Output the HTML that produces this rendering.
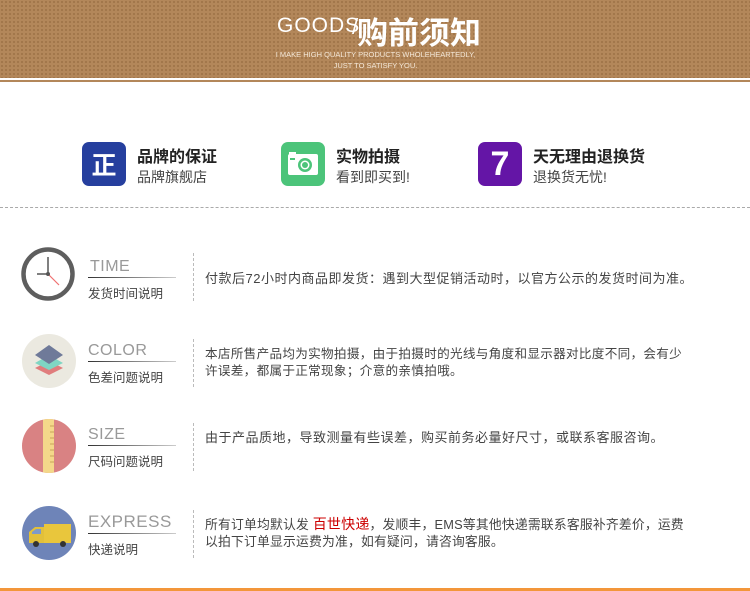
<!DOCTYPE html>
<html><head><meta charset="utf-8"><style>
*{margin:0;padding:0;box-sizing:border-box}
body{width:750px;height:591px;background:#fff;position:relative;overflow:hidden;font-family:"Liberation Sans","Noto Sans CJK SC",sans-serif;color:#333}
.a{position:absolute}
.band{left:0;top:0;width:750px;height:78px;background-color:#b3875a;background-image:radial-gradient(#9e7448 0.8px,transparent 1.2px);background-size:4px 4px}
.ico{width:44px;height:44px;border-radius:7px;color:#fff;display:flex;align-items:center;justify-content:center}
.t{font-size:16px;font-weight:bold;color:#222}
.s{font-size:14px;color:#444}
.lab{font-size:16px;color:#999;letter-spacing:0.5px}
.ul{height:1px;width:88px;background:linear-gradient(to right,#333,#ccc)}
.sub{font-size:12.5px;color:#444}
.div{width:0;border-left:1px dashed #bbb;height:48px}
.txt{font-size:13px;color:#444;line-height:17px;white-space:nowrap;letter-spacing:0.5px}
</style></head><body>
<div class="a band"></div>
<div class="a" style="left:0;top:80px;width:750px;height:2px;background:#b3875a"></div>
<div class="a" style="left:277px;top:14px;font-size:21px;color:#fff;letter-spacing:1px">GOODS</div>
<div class="a" style="left:352px;top:14px;font-size:22px;color:#fff">/</div>
<div class="a" style="left:357px;top:8px;font-size:31px;font-weight:bold;color:#fff">购前须知</div>
<div class="a" style="left:268px;top:49px;font-size:7.5px;color:#f3e6d6;width:215px;text-align:center;line-height:11px">I MAKE HIGH QUALITY PRODUCTS WHOLEHEARTEDLY,<br>JUST TO SATISFY YOU.</div>

<div class="a ico" style="left:82px;top:142px;background:#263f9e;font-size:25px;font-weight:bold">正</div>
<div class="a t" style="left:137px;top:143px">品牌的保证</div>
<div class="a s" style="left:137px;top:167px">品牌旗舰店</div>
<div class="a ico" style="left:281px;top:142px;background:#4cc47a">
<svg width="34" height="26" viewBox="0 0 34 26"><rect x="2" y="3" width="30" height="21" rx="2" fill="#fff"/><rect x="3" y="1" width="7" height="3" fill="#fff"/><circle cx="19" cy="14" r="7" fill="#4cc47a"/><circle cx="19" cy="14" r="4.5" fill="#fff"/><circle cx="19" cy="14" r="3" fill="#4cc47a"/><rect x="4" y="7" width="5" height="2" fill="#4cc47a"/></svg></div>
<div class="a t" style="left:336px;top:143px">实物拍摄</div>
<div class="a s" style="left:336px;top:167px">看到即买到!</div>
<div class="a ico" style="left:478px;top:142px;background:#6415a6;font-size:34px;font-weight:bold;font-family:'Liberation Sans',sans-serif">7</div>
<div class="a t" style="left:533px;top:143px">天无理由退换货</div>
<div class="a s" style="left:533px;top:167px">退换货无忧!</div>
<div class="a" style="left:0;top:207px;width:750px;border-top:1px dashed #aaa"></div>

<svg class="a" style="left:21px;top:247px" width="54" height="54"><circle cx="27" cy="27" r="24.5" fill="#fff" stroke="#5e5e5e" stroke-width="4.5"/><line x1="27" y1="27" x2="27" y2="10" stroke="#555" stroke-width="1.5"/><line x1="27" y1="27" x2="16" y2="27" stroke="#555" stroke-width="1.5"/><line x1="27" y1="27" x2="38" y2="38" stroke="#f07070" stroke-width="1.2"/><circle cx="27" cy="27" r="2" fill="#555"/></svg>
<div class="a lab" style="left:90px;top:258px">TIME</div>
<div class="a ul" style="left:88px;top:277px"></div>
<div class="a sub" style="left:88px;top:283px">发货时间说明</div>
<div class="a div" style="left:193px;top:253px"></div>
<div class="a txt" style="left:205px;top:270px">付款后72小时内商品即发货：遇到大型促销活动时，以官方公示的发货时间为准。</div>

<svg class="a" style="left:21px;top:333px" width="56" height="56"><circle cx="28" cy="28" r="27" fill="#ebe9e0"/><path d="M28 28 L42 35 L28 42 L14 35Z" fill="#e07d7d"/><path d="M28 22 L42 30 L28 37 L14 30Z" fill="#7fd6c3"/><path d="M28 12 L42 22 L28 31 L14 22Z" fill="#6f7a99"/></svg>
<div class="a lab" style="left:88px;top:342px">COLOR</div>
<div class="a ul" style="left:88px;top:361px"></div>
<div class="a sub" style="left:88px;top:367px">色差问题说明</div>
<div class="a div" style="left:193px;top:339px"></div>
<div class="a txt" style="left:205px;top:346px;font-size:12.6px;letter-spacing:0.3px">本店所售产品均为实物拍摄，由于拍摄时的光线与角度和显示器对比度不同，会有少<br>许误差，都属于正常现象；介意的亲慎拍哦。</div>

<svg class="a" style="left:21px;top:418px" width="56" height="56"><defs><clipPath id="c"><circle cx="28" cy="28" r="27"/></clipPath></defs><circle cx="28" cy="28" r="27" fill="#d98283"/><rect x="22" y="0" width="11" height="56" fill="#f4d88a" clip-path="url(#c)"/><g stroke="#c9a55a" stroke-width="1"><line x1="29" y1="8" x2="33" y2="8"/><line x1="29" y1="14" x2="33" y2="14"/><line x1="29" y1="20" x2="33" y2="20"/><line x1="29" y1="26" x2="33" y2="26"/><line x1="29" y1="32" x2="33" y2="32"/><line x1="29" y1="38" x2="33" y2="38"/><line x1="29" y1="44" x2="33" y2="44"/></g></svg>
<div class="a lab" style="left:88px;top:426px">SIZE</div>
<div class="a ul" style="left:88px;top:445px"></div>
<div class="a sub" style="left:88px;top:451px">尺码问题说明</div>
<div class="a div" style="left:193px;top:423px"></div>
<div class="a txt" style="left:205px;top:429px">由于产品质地，导致测量有些误差，购买前务必量好尺寸，或联系客服咨询。</div>

<svg class="a" style="left:21px;top:505px" width="56" height="56"><circle cx="28" cy="28" r="27" fill="#6e84b8"/><rect x="23" y="19" width="27" height="19" fill="#e9c63c"/><path d="M8 27 L14 22 L23 22 L23 38 L8 38Z" fill="#e2c03a"/><path d="M11 27 L15 24 L20 24 L20 29 L11 29Z" fill="#7e9ac8"/><circle cx="15" cy="39" r="3" fill="#333"/><circle cx="42" cy="39" r="3" fill="#333"/></svg>
<div class="a lab" style="left:88px;top:512px;font-size:17px">EXPRESS</div>
<div class="a ul" style="left:88px;top:533px"></div>
<div class="a sub" style="left:88px;top:539px">快递说明</div>
<div class="a div" style="left:193px;top:510px"></div>
<div class="a txt" style="left:205px;top:516px;font-size:12.8px;letter-spacing:0.2px">所有订单均默认发 <span style="color:#c00;font-size:14px">百世快递</span>，发顺丰，EMS等其他快递需联系客服补齐差价，运费<br>以拍下订单显示运费为准，如有疑问，请咨询客服。</div>

<div class="a" style="left:0;top:588px;width:750px;height:3px;background:#f3963a"></div>
</body></html>
